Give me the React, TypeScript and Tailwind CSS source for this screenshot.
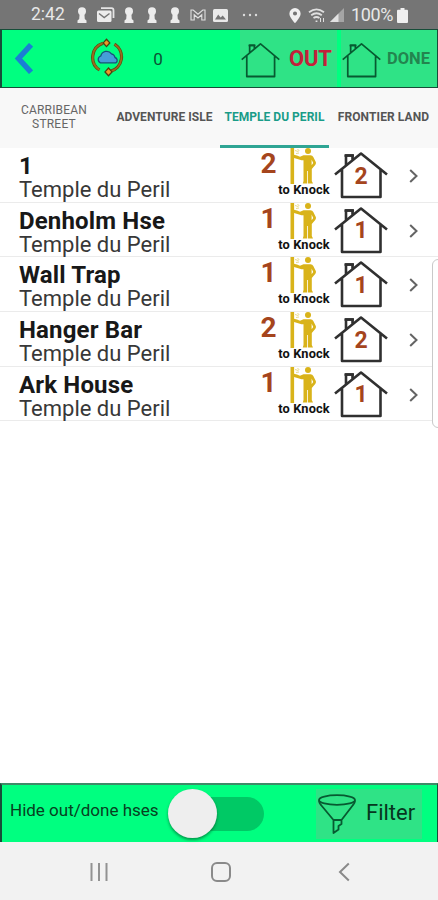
import { clsx } from "clsx";

const tabs = [
  { label: "CARRIBEAN STREET", className: "w-[108px] px-4 font-normal text-[#666] leading-[14px] tracking-[0.2px]" },
  { label: "ADVENTURE ISLE", className: "w-[112px] pl-px font-bold text-[#555] tracking-[0.05px]" },
  { label: "TEMPLE DU PERIL", className: "w-[109px] font-bold text-[#1a9c88] tracking-[0.02px]", active: true },
  { label: "FRONTIER LAND", className: "w-[109px] font-bold text-[#555] tracking-[0.1px]" },
];

const houses = [
  { name: "1", street: "Temple du Peril", knock: 2, total: 2 },
  { name: "Denholm Hse", street: "Temple du Peril", knock: 1, total: 1 },
  { name: "Wall Trap", street: "Temple du Peril", knock: 1, total: 1 },
  { name: "Hanger Bar", street: "Temple du Peril", knock: 2, total: 2 },
  { name: "Ark House", street: "Temple du Peril", knock: 1, total: 1 },
];

function HouseIcon({ className }: { className: string }) {
  return (
    <svg viewBox="0 0 54 48" preserveAspectRatio="none" className={className} fill="none" stroke="currentColor" strokeLinejoin="round">
      <path d="M1 23.5 27 2.5 53 23.5M8 18.5V46H46.5V18.5M12 14V4.5H18.5V9" />
      <path d="M10.5 4.5H20" />
    </svg>
  );
}

function KeyholeIcon({ className }: { className?: string }) {
  return (
    <svg viewBox="0 0 10 16" className={clsx("h-4 w-2.5 shrink-0", className)} fill="#ececec">
      <circle cx="5" cy="4.2" r="4" />
      <path d="M2.6 7H7.4L7.8 12 9.5 13.5V16H.5V13.5L2.2 12Z" />
    </svg>
  );
}

function StatusBar() {
  return (
    <div className="flex h-[29px] items-center bg-[#757575] pt-px pl-[31px] text-[#e8e8e8]">
      <span className="w-[36px] text-[17.5px] leading-none">2:42</span>
      <KeyholeIcon className="ml-[10px]" />
      <svg viewBox="0 0 18 16" className="ml-[10px] h-4 w-[18px]" fill="none">
        <path d="M4 1.2H14.5Q16.5 1.2 16.5 3.2V11" stroke="#e5e5e5" strokeWidth="1.8" />
        <rect y="3.5" width="14.5" height="11.5" rx="1.5" fill="#ececec" />
        <path d="M2 6.5 7.2 10.5 12.5 6.5" stroke="#757575" strokeWidth="1.4" />
      </svg>
      <KeyholeIcon className="ml-[9px]" />
      <KeyholeIcon className="ml-[13px]" />
      <KeyholeIcon className="ml-[13px]" />
      <svg viewBox="0 0 16 12" className="ml-[10px] h-3 w-4" fill="none" stroke="#e0e0e0" strokeWidth="1.1">
        <path d="M1 1H3.2L8 5.2 12.8 1H15V11H11.8V5.8L8 9 4.2 5.8V11H1Z" />
      </svg>
      <svg viewBox="0 0 15 13" className="ml-[7px] h-[13px] w-[15px]">
        <rect width="15" height="13" rx="1.5" fill="#e9e9e9" />
        <path d="M2 10.5 5.2 5.5 7.6 8.5 9.7 6.5 13 10.5Z" fill="#757575" />
      </svg>
      <svg viewBox="0 0 16 4" className="ml-[14px] h-1 w-4" fill="#ddd">
        <circle cx="2" cy="2" r="1.2" />
        <circle cx="8" cy="2" r="1.2" />
        <circle cx="14" cy="2" r="1.2" />
      </svg>
      <svg viewBox="0 0 12 16" className="ml-[31px] h-[15px] w-3" fill="#f0f0f0" fillRule="evenodd">
        <path d="M6 0A6 6 0 0 0 0 6C0 10 6 16 6 16S12 10 12 6A6 6 0 0 0 6 0ZM6 3.6A2.2 2.2 0 1 1 6 8 2.2 2.2 0 0 1 6 3.6Z" />
      </svg>
      <svg viewBox="0 0 18 15" className="ml-[7px] h-[15px] w-[18px]" fill="none" stroke="#e0e0e0" strokeWidth="1.8">
        <path d="M1 4.2Q8.5-1.6 16 4.2M3.2 7.2Q8.5 3.3 13.8 7.2M5.5 10Q8.5 8 11.5 10" />
        <path d="M8.5 12.5V14" />
        <path d="M12.5 10V14M15.5 10V14" strokeWidth="1" />
      </svg>
      <svg viewBox="0 0 14 14" className="ml-[4px] h-[14px] w-[14px]">
        <path d="M14 0V14H0Z" fill="#a5a5a5" />
        <path d="M8.5 5.5V14H0Z" fill="#e2e2e2" />
      </svg>
      <span className="ml-[7px] w-[43px] text-[18px] leading-none tracking-[-0.4px]">100%</span>
      <svg viewBox="0 0 11 15" className="ml-[3px] h-[15px] w-[11px]" fill="#f0f0f0">
        <path d="M3.5 0H7.5V1.8H10Q11 1.8 11 3V14Q11 15 10 15H1Q0 15 0 14V3Q0 1.8 1 1.8H3.5Z" />
      </svg>
    </div>
  );
}

function Header() {
  return (
    <header className="flex h-[59px] items-stretch border border-l-2 border-[#174d39] bg-[#00ff80]">
      <svg viewBox="0 0 19 31" className="mt-[13px] ml-[12px] h-[31px] w-[19px]" fill="none" stroke="#1a7fd4" strokeWidth="5.5">
        <path d="M17 1.8 4.5 15.5 17 29.2" />
      </svg>
      <svg viewBox="0 0 34 40" className="mt-[8px] ml-[57px] h-10 w-[34px]" fill="none">
        <path d="M9.5 32A15 15 0 0 1 13 5.2M24.5 6.2A15 15 0 0 1 20 33.5" stroke="#5a4a12" strokeWidth="3.2" />
        <path d="M9.5 32A15 15 0 0 1 13 5.2M24.5 6.2A15 15 0 0 1 20 33.5" stroke="#9c6b1e" strokeWidth="1.8" />
        <path d="M16.5 1.2 19.8 4.9 16.5 8.6 13.2 4.9ZM18.5 30 22 33.9 18.5 37.8 15 33.9Z" fill="#ec9a28" stroke="#4f3f12" strokeWidth="1.3" />
        <path d="M10.5 24.8A3.6 3.6 0 0 1 10.8 18 6 6 0 0 1 21.5 15.8 4.6 4.6 0 0 1 25 19.5 3 3 0 0 1 26 24.8Z" fill="#459ed8" stroke="#1b4f78" strokeWidth="1.3" />
      </svg>
      <span className="ml-[28px] flex w-[12px] items-center justify-center pt-[3px] text-[17px] text-[#0b5233]">0</span>
      <div className="ml-[76px] flex w-[97px] items-center bg-[#2fe386]">
        <HouseIcon className="mt-[2px] ml-px h-[36px] w-[39px] shrink-0 text-[#075a31] [stroke-width:2.4]" />
        <span className="ml-[9px] text-[22px] font-bold tracking-[-0.2px] text-[#c3203a]">OUT</span>
      </div>
      <div className="ml-[4px] flex flex-1 items-center bg-[#2fe386]">
        <HouseIcon className="mt-[2px] ml-px h-[36px] w-[39px] shrink-0 text-[#075a31] [stroke-width:2.4]" />
        <span className="ml-[6px] pt-px text-[16.5px] font-bold text-[#23854f]">DONE</span>
      </div>
    </header>
  );
}

function KnockIcon() {
  return (
    <svg viewBox="0 0 26 36" className="h-9 w-[26px]" fill="#d9b31a">
      <rect x="0.5" y="0" width="3.6" height="36" />
      <circle cx="18" cy="3" r="3" />
      <path d="M13.5 7.2H20.5Q22.5 7.2 23.3 9L25.8 14Q26.3 15.5 25.2 17L21.8 21V33L23 35.5H18V23H17.2V35.5H12.8L13.5 33V12.3L11.5 12.3 4 10V6.8L7 7.5 10 8.8Z" />
      <path d="M21.6 11.5 23.2 15 21.6 17.3Z" fill="#fff" />
      <path d="M5 2.5 8.5 3.6M7.5 1 9.3 3M6 5.5 9 5" stroke="#eadb8d" strokeWidth="1" />
    </svg>
  );
}

function HouseRow({ name, street, knock, total }: (typeof houses)[number]) {
  return (
    <li className="flex h-[54.7px] border-b border-[#ebebeb] pl-[19px]">
      <div className="w-[240px] whitespace-nowrap">
        <div className="pt-[6px] text-[24px] leading-[24px] font-bold tracking-[0.15px] text-[#181818]">{name}</div>
        <div className="text-[22px] leading-[23px] text-[#383838]">{street}</div>
      </div>
      <span className="w-[19px] pt-[2px] text-center text-[28px] leading-[28px] font-bold text-[#a5451d]">{knock}</span>
      <div className="flex w-[52px] flex-col items-center">
        <div className="mr-[2px]">
          <KnockIcon />
        </div>
        <span className="text-[12.8px] leading-[12px] font-bold tracking-[0.1px] whitespace-nowrap text-[#111]">to Knock</span>
      </div>
      <div className="mt-[3px] ml-[4px] grid h-[48px] w-[54px] place-items-center">
        <HouseIcon className="col-start-1 row-start-1 h-[48px] w-[54px] text-[#303030] [stroke-width:2.6]" />
        <span className="col-start-1 row-start-1 pt-[2px] text-[23px] leading-none font-bold text-[#a5451d]">{total}</span>
      </div>
      <svg viewBox="0 0 9 14" className="mt-[21px] ml-[21px] h-[14px] w-[9px]" fill="none" stroke="#646464" strokeWidth="2">
        <path d="M1.2 1 7.5 7 1.2 13" />
      </svg>
    </li>
  );
}

export default function App() {
  return (
    <main className="relative flex h-[900px] w-[438px] flex-col overflow-hidden bg-white font-[Roboto,sans-serif]">
      <StatusBar />
      <Header />
      <nav className="flex h-[60px] bg-[#f8f8f8] text-[12px]">
        {tabs.map((tab) => (
          <div
            key={tab.label}
            className={clsx(
              "flex shrink-0 items-center justify-center border-b-[3px] pt-px text-center",
              tab.active ? "border-[#2fa594]" : "border-transparent",
              tab.className,
            )}
          >
            {tab.label}
          </div>
        ))}
      </nav>
      <ul className="flex-1">
        {houses.map((house) => (
          <HouseRow key={house.name} {...house} />
        ))}
      </ul>

      {/* edge panel handle */}
      <div className="absolute top-[259px] right-[-6px] h-[169px] w-[12px] rounded-l-[6px] border border-[#c9c9c9] bg-white" />

      <footer className="flex h-[59px] items-center border border-t-2 border-b-0 border-l-2 border-[#174d39] border-t-[#3f8a68] bg-[#00ff80]">
        <span className="ml-[8px] w-[150px] pb-[5px] text-[17px] whitespace-nowrap text-[#07401f]">Hide out/done hses</span>
        <div className="ml-[8px] flex w-[96px] items-center">
          <div className="z-10 h-[49px] w-[49px] shrink-0 rounded-full bg-[#eeeeee] shadow-[0_2px_3px_rgba(0,70,30,0.55)]" />
          <div className="-ml-[24px] h-[34px] w-[71px] shrink-0 rounded-r-full bg-[#00c965]" />
        </div>
        <div className="ml-[52px] flex h-[50px] w-[106px] items-center bg-[#2fe386]">
          <svg viewBox="0 0 38 40" className="ml-[2px] h-10 w-[38px]" fill="none" stroke="#075a31" strokeWidth="1.8" strokeLinejoin="round">
            <ellipse cx="19" cy="6" rx="18" ry="4.8" />
            <path d="M1 6.5Q1 9 3 11L15.5 26V39L20.5 35.5V32L23.5 30V26L35 11Q37 9 37 6.5M15.5 26H23.5" />
          </svg>
          <span className="ml-[10px] pb-[2px] text-[22px] text-[#06371f]">Filter</span>
        </div>
      </footer>
      <div className="flex h-[58px] items-center bg-[#f2f2f2] pt-px pl-[90px]">
        <svg viewBox="0 0 18 18" className="h-[18px] w-[18px]" stroke="#929292" strokeWidth="2">
          <path d="M1.5 0V18M9 0V18M16.5 0V18" />
        </svg>
        <svg viewBox="0 0 20 20" className="ml-[103px] h-5 w-5" fill="none" stroke="#8a8a8a" strokeWidth="2">
          <rect x="1" y="1" width="18" height="18" rx="5" />
        </svg>
        <svg viewBox="0 0 12 20" className="ml-[107px] h-5 w-3" fill="none" stroke="#8a8a8a" strokeWidth="2">
          <path d="M10.8 1.5 2 10 10.8 18.5" />
        </svg>
      </div>
    </main>
  );
}
